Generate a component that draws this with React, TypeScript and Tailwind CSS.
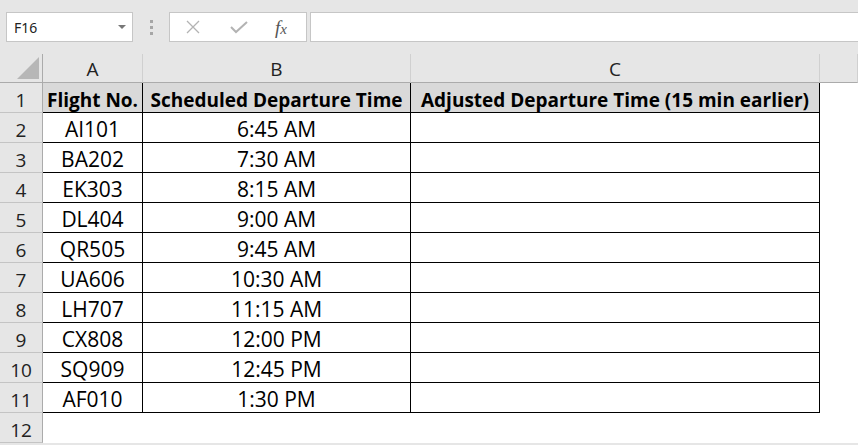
import React from "react"

const rows: [string, string][] = [
  ["AI101", "6:45 AM"],
  ["BA202", "7:30 AM"],
  ["EK303", "8:15 AM"],
  ["DL404", "9:00 AM"],
  ["QR505", "9:45 AM"],
  ["UA606", "10:30 AM"],
  ["LH707", "11:15 AM"],
  ["CX808", "12:00 PM"],
  ["SQ909", "12:45 PM"],
  ["AF010", "1:30 PM"],
]

const cell = "flex h-[30px] items-end justify-center pb-[2px] leading-none"
const rowHead =
  "flex h-[30px] items-end justify-center border-b border-r border-[#c4c4c4] border-r-[#ababab] pb-[2px] leading-none text-[#222]"

export default function App() {
  return (
    <div className="h-[445px] w-[858px] overflow-hidden bg-[#e6e6e6] font-['Open_Sans',sans-serif] text-[19px] text-black">
      {/* formula bar */}
      <div className="flex h-[54px] items-start pt-[12px]">
        <div className="ml-[6px] flex h-[30px] w-[127px] items-center justify-between border border-[#c6c6c6] bg-white pl-[7px] pr-[6px] font-['Noto_Sans',sans-serif] text-[14px] text-[#222]">
          <span>F16</span>
          <span className="h-0 w-0 border-x-[4px] border-t-[4px] border-x-transparent border-t-[#777]" />
        </div>
        <div className="ml-[17px] mt-[8px] flex flex-col gap-[3px]">
          <span className="h-[3px] w-[3px] bg-[#a6a6a6]" />
          <span className="h-[3px] w-[3px] bg-[#a6a6a6]" />
          <span className="h-[3px] w-[3px] bg-[#a6a6a6]" />
        </div>
        <div className="ml-[16px] flex h-[30px] w-[138px] items-center border border-[#c6c6c6] bg-white">
          <svg width="16" height="16" viewBox="0 0 16 16" className="ml-[15px]">
            <path d="M2 2 L14 14 M14 2 L2 14" stroke="#b3b3b3" strokeWidth="1.3" fill="none" />
          </svg>
          <svg width="20" height="16" viewBox="0 0 20 16" className="ml-[28px]">
            <path d="M2 8 L7 13 L18 3" stroke="#b3b3b3" strokeWidth="2" fill="none" />
          </svg>
          <span className="ml-[26px] font-['Liberation_Serif',serif] text-[19px] italic leading-none text-[#555]">
            f<span className="text-[15px]">x</span>
          </span>
        </div>
        <div className="ml-[3px] h-[30px] flex-1 border-y border-l border-[#c6c6c6] bg-white" />
      </div>

      {/* sheet */}
      <div className="grid grid-cols-[43px_100px_268px_409px_1fr]">
        {/* column headers */}
        <div className="relative h-[29px] border-b border-r border-[#ababab]">
          <svg width="22" height="22" viewBox="0 0 22 22" className="absolute bottom-[3px] right-[3px]">
            <path d="M22 0 L22 22 L0 22 Z" fill="#b7b7b7" />
          </svg>
        </div>
        {["A", "B", "C", ""].map((c) => (
          <div
            key={c || "d"}
            className="flex h-[29px] items-end justify-center border-b border-r border-[#ababab] border-r-[#d0d0d0] pb-[3px] leading-none text-[#222]"
          >
            {c}
          </div>
        ))}

        {/* row 1 */}
        <div className={rowHead}>1</div>
        <div className={`${cell} border-b border-r border-black bg-[#d9d9d9] font-bold`}>Flight No.</div>
        <div className={`${cell} border-b border-r border-black bg-[#d9d9d9] font-bold`}>
          Scheduled Departure Time
        </div>
        <div className={`${cell} border-b border-r border-black bg-[#d9d9d9] font-bold`}>
          Adjusted Departure Time (15 min earlier)
        </div>
        <div className="h-[30px] bg-white" />

        {rows.map(([flight, time], i) => (
          <React.Fragment key={flight}>
            <div className={rowHead}>{i + 2}</div>
            <div className={`${cell} border-b border-r border-black bg-white text-[21px]`}>{flight}</div>
            <div className={`${cell} border-b border-r border-black bg-white text-[21px]`}>{time}</div>
            <div className={`${cell} border-b border-r border-black bg-white`} />
            <div className="h-[30px] bg-white" />
          </React.Fragment>
        ))}

        {/* row 12 */}
        <div className={rowHead}>12</div>
        <div className="col-span-4 h-[30px] bg-white" />
      </div>
    </div>
  )
}
